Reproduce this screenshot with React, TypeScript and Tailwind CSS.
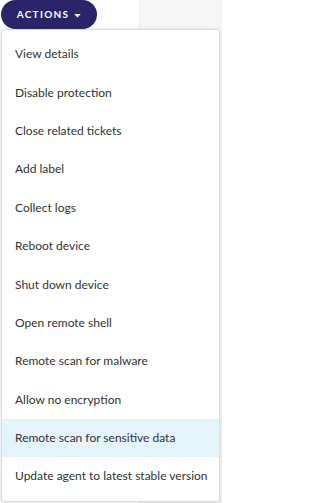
import React from "react";

const actions = [
  "View details",
  "Disable protection",
  "Close related tickets",
  "Add label",
  "Collect logs",
  "Reboot device",
  "Shut down device",
  "Open remote shell",
  "Remote scan for malware",
  "Allow no encryption",
  "Remote scan for sensitive data",
  "Update agent to latest stable version",
];

const App: React.FC = () => {
  const active = 10;
  return (
    <div
      className="relative w-[222px] h-[503px] overflow-hidden bg-white"
      style={{ fontFamily: "Lato, 'Open Sans', sans-serif" }}
    >
      {/* Page behind the menu */}
      <div className="flex h-full">
        <div className="w-[139px] bg-white"></div>
        <div className="flex-1 bg-[#f6f6f6] border-l border-[#eeeeee]"></div>
      </div>

      {/* Actions button */}
      <button className="absolute left-px top-0 h-[29px] w-[96px] rounded-full bg-[#2b2468] flex items-center justify-center gap-[5px] text-white text-[10px] font-bold tracking-[0.13em]">
        ACTIONS
        <svg width="7" height="4" viewBox="0 0 8 5" className="mt-[2px]">
          <path d="M0 0h8L4 4.5z" fill="white" />
        </svg>
      </button>

      {/* Dropdown menu */}
      <ul className="absolute left-px top-[29px] w-[219px] rounded-[3px] border border-[#dcdcdc] bg-white py-[5px] shadow-[0_1px_4px_rgba(0,0,0,0.15)]">
        {actions.map((a, i) => (
          <li
            key={a}
            className={`h-[38.4px] flex items-center px-[13px] text-[12px] whitespace-nowrap text-[#333333] ${
              i === active ? "bg-[#e3f4fb]" : ""
            }`}
          >
            {a}
          </li>
        ))}
      </ul>
    </div>
  );
};

export default App;
